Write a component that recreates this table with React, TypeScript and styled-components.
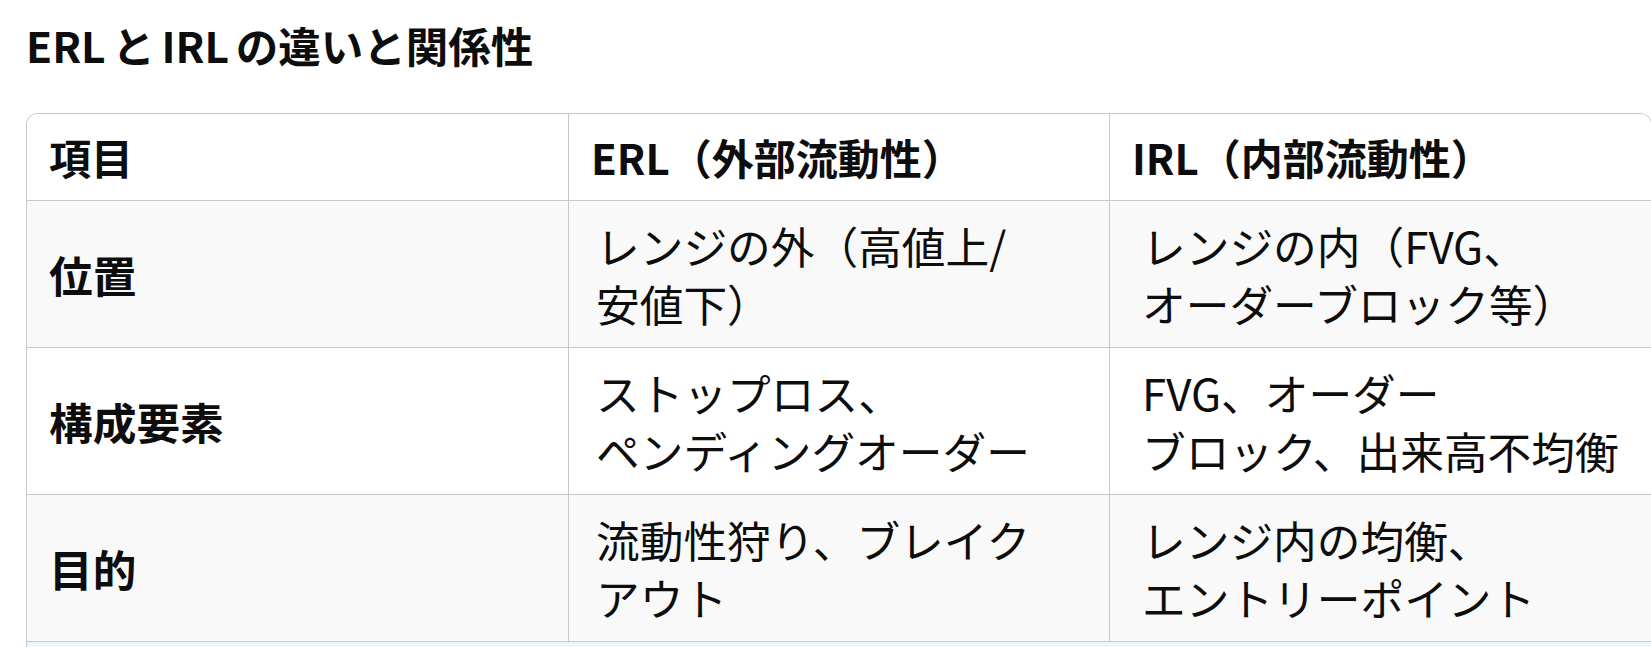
import React from "react";
import styled, { createGlobalStyle } from "styled-components";

const GlobalStyle = createGlobalStyle`
  html, body {
    margin: 0;
    padding: 0;
    background: #ffffff;
  }
  body {
    font-family: "Noto Sans CJK JP", "Noto Sans", sans-serif;
    color: #0d0d0d;
  }
`;

interface RowData {
  label: string;
  erl: string[];
  irl: string[];
}

const rows: RowData[] = [
  {
    label: "位置",
    erl: ["レンジの外（高値上/", "安値下）"],
    irl: ["レンジの内（FVG、", "オーダーブロック等）"],
  },
  {
    label: "構成要素",
    erl: ["ストップロス、", "ペンディングオーダー"],
    irl: ["FVG、オーダー", "ブロック、出来高不均衡"],
  },
  {
    label: "目的",
    erl: ["流動性狩り、ブレイク", "アウト"],
    irl: ["レンジ内の均衡、", "エントリーポイント"],
  },
];

const Lines = ({ lines }: { lines: string[] }) => (
  <>
    {lines.map((line, i) => (
      <React.Fragment key={i}>
        {i > 0 && <br />}
        {line}
      </React.Fragment>
    ))}
  </>
);

const App = (): JSX.Element => {
  return (
    <>
      <GlobalStyle />
      <Page>
        <Title>ERL と IRL の違いと関係性</Title>
        <TableFrame>
          <Table>
            <colgroup>
              <col style={{ width: 542 }} />
              <col style={{ width: 541 }} />
              <col />
            </colgroup>
            <thead>
              <Row>
                <HeadCell>項目</HeadCell>
                <HeadCell>ERL（外部流動性）</HeadCell>
                <HeadCell>IRL（内部流動性）</HeadCell>
              </Row>
            </thead>
            <tbody>
              {rows.map((row, index) => (
                <Row key={row.label} $shade={index % 2 === 0}>
                  <BodyCell $label>{row.label}</BodyCell>
                  <BodyCell $indent={27}>
                    <Lines lines={row.erl} />
                  </BodyCell>
                  <BodyCell $indent={32}>
                    <Lines lines={row.irl} />
                  </BodyCell>
                </Row>
              ))}
            </tbody>
          </Table>
          <NextStrip />
        </TableFrame>
      </Page>
    </>
  );
};

const Page = styled.div`
  width: 1651px;
  height: 647px;
  box-sizing: border-box;
  padding-left: 26px;
  overflow: hidden;
`;

const Title = styled.h3`
  margin: 15px 0 0 0;
  font-size: 42.5px;
  line-height: 60px;
  font-weight: 700;
  word-spacing: -3px;
  color: #0d0d0d;
`;

const TableFrame = styled.div`
  margin-top: 38px;
  width: 1624px;
  border: 1px solid #c8c8c8;
  border-bottom: none;
  border-radius: 12px 12px 0 0;
  overflow: hidden;
`;

const Table = styled.table`
  width: 100%;
  table-layout: fixed;
  border-collapse: separate;
  border-spacing: 0;
`;

const Row = styled.tr<{ $shade?: boolean }>`
  background: ${(p) => (p.$shade ? "#f9f9f9" : "#ffffff")};
`;

const HeadCell = styled.th`
  height: 86px;
  padding: 0 22px;
  text-align: left;
  vertical-align: middle;
  font-size: 42px;
  line-height: 58px;
  font-weight: 700;
  border-bottom: 1px solid #c8c8c8;
  border-right: 1px solid #c8c8c8;
  &:last-child {
    border-right: none;
  }
`;

const BodyCell = styled.td<{ $label?: boolean; $indent?: number }>`
  height: 146px;
  padding: 0 20px 0 ${(p) => p.$indent ?? 22}px;
  text-align: left;
  vertical-align: middle;
  font-size: 43.7px;
  line-height: 58px;
  font-weight: ${(p) => (p.$label ? 700 : 400)};
  white-space: nowrap;
  border-bottom: 1px solid #c8c8c8;
  border-right: 1px solid #c8c8c8;
  &:last-child {
    border-right: none;
  }
`;

const NextStrip = styled.div`
  height: 40px;
  background: #eef5fe;
`;

export default App;
